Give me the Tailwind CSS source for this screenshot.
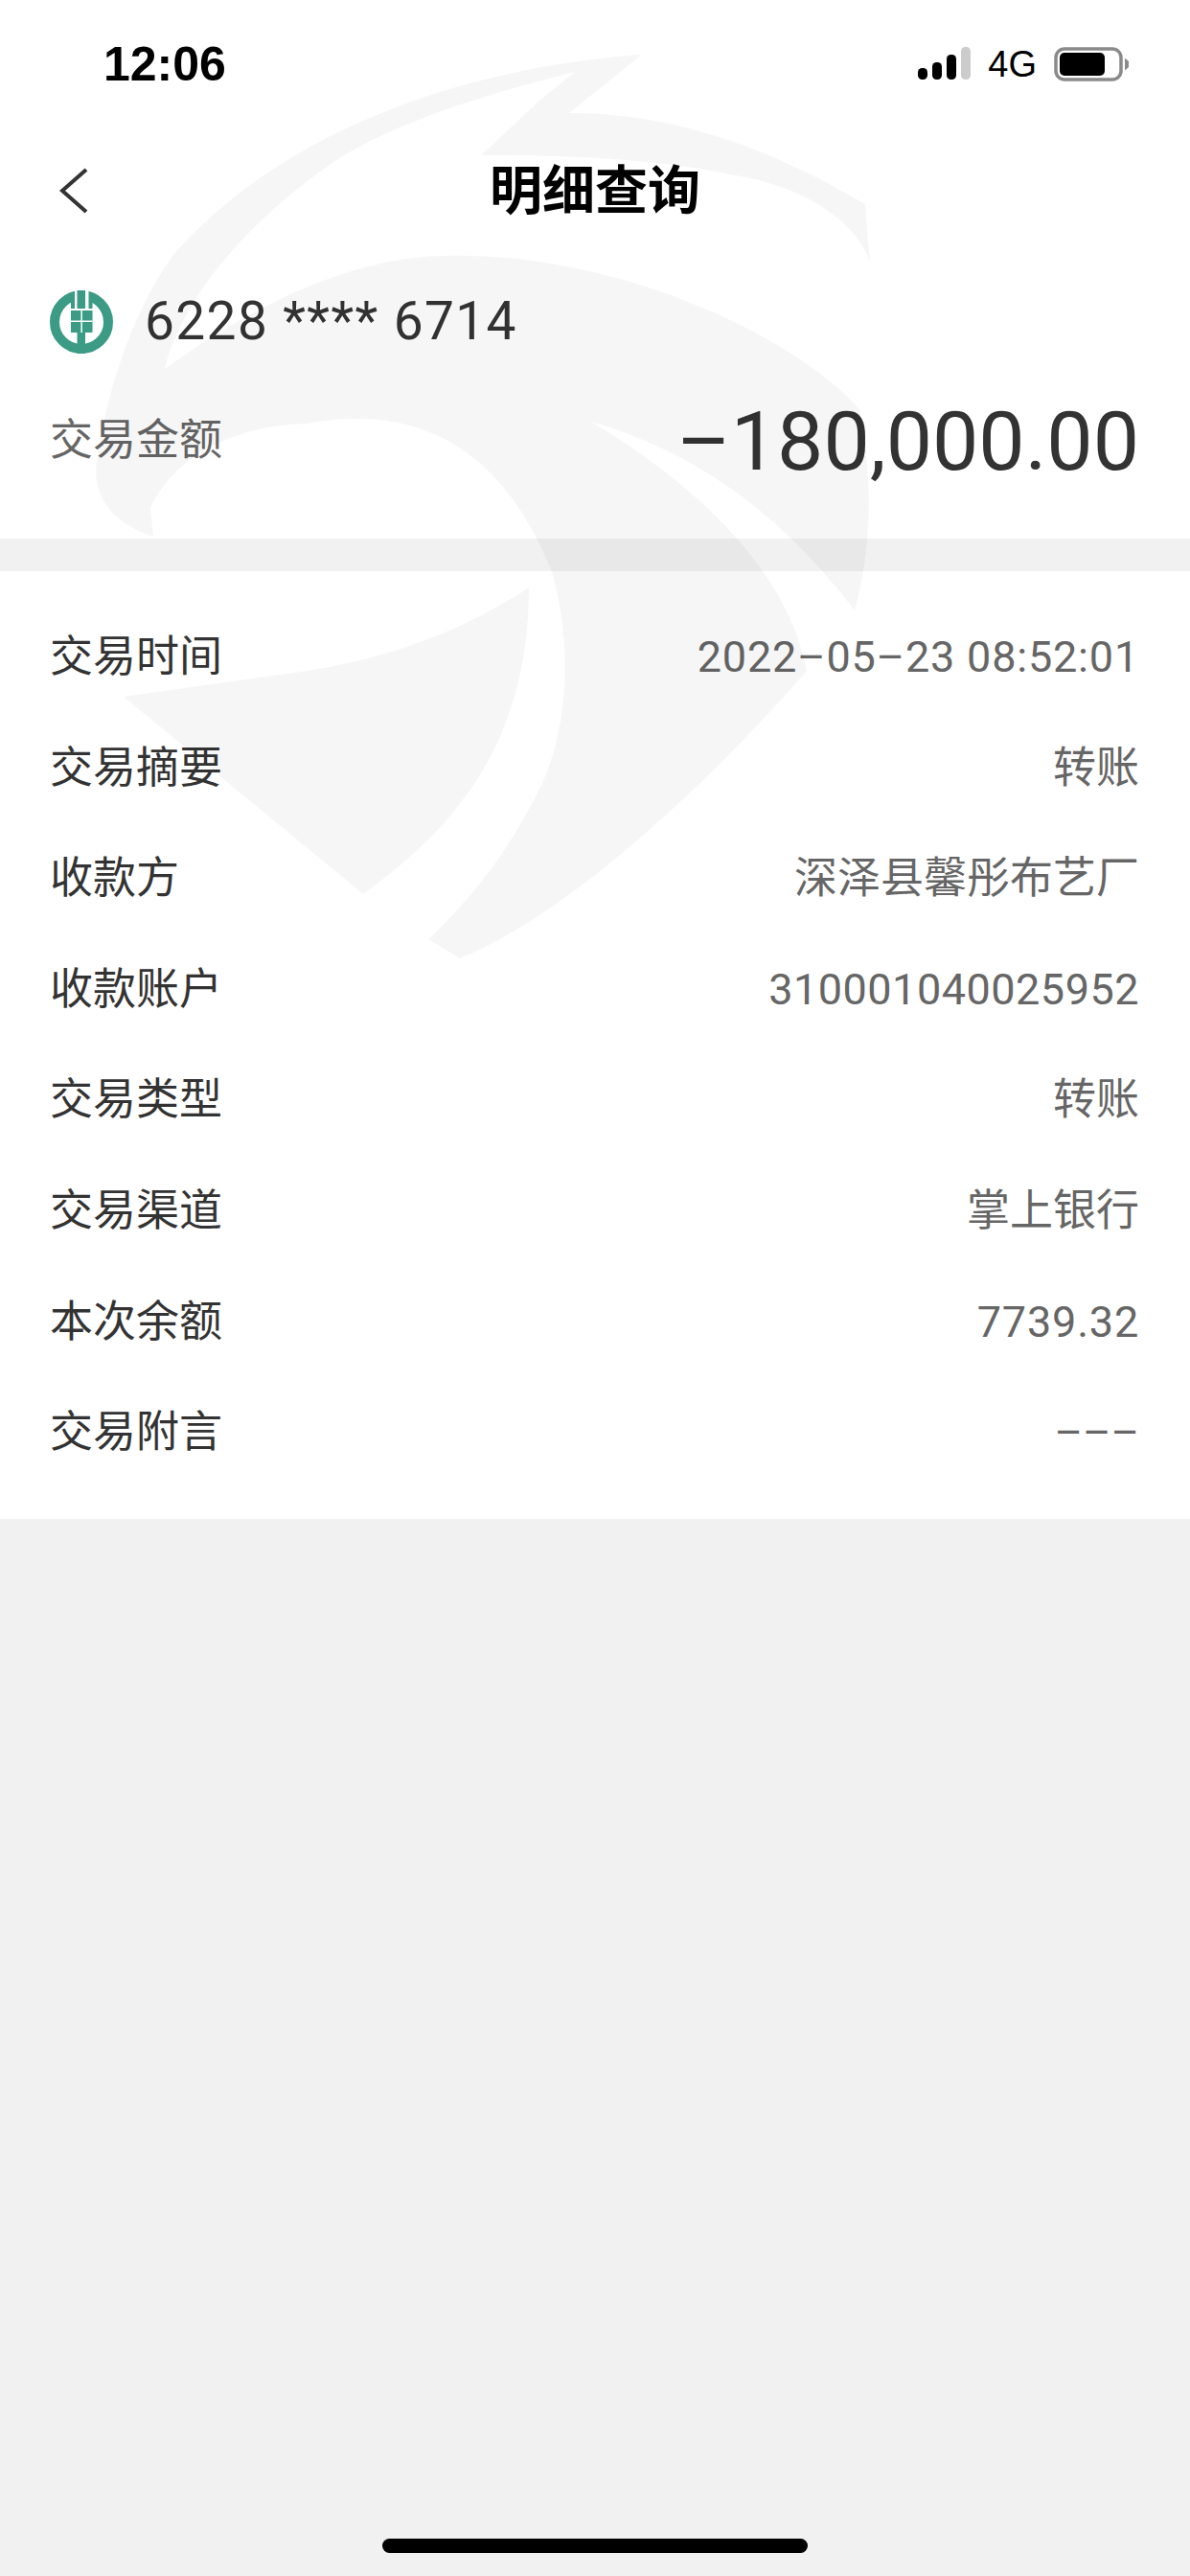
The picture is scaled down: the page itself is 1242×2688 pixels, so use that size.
<!DOCTYPE html>
<html lang="zh">
<head>
<meta charset="utf-8">
<title>明细查询</title>
<script src="https://cdn.jsdelivr.net/npm/@tailwindcss/browser@4"></script>
</head>
<body class="bg-[#f1f1f1] font-['Roboto','Noto_Sans_CJK_SC',sans-serif]">
<div class="relative w-[1242px] h-[2688px] overflow-hidden">

  <div class="bg-white">
    <!-- status bar -->
    <div class="h-[134px] flex items-center justify-between pl-[108px] pr-[64px]">
      <span class="text-[50px] font-bold text-black font-['Liberation_Sans',sans-serif]">12:06</span>
      <div class="flex items-center">
        <svg width="56" height="36" viewBox="0 0 56 36" class="mr-[17px]">
          <rect x="0" y="22" width="10" height="12" rx="4.5" fill="#000"/>
          <rect x="15" y="16" width="10" height="18" rx="4.5" fill="#000"/>
          <rect x="30" y="8" width="10" height="26" rx="4.5" fill="#000"/>
          <rect x="45" y="0" width="10" height="34" rx="4.5" fill="#ccc"/>
        </svg>
        <span class="text-[38px] text-black mr-[18px] font-['Liberation_Sans',sans-serif]">4G</span>
        <svg width="78" height="36" viewBox="0 0 78 36">
          <rect x="2" y="2" width="68" height="32" rx="9" fill="none" stroke="#8a8a8a" stroke-width="3.5"/>
          <rect x="6" y="6" width="47" height="24" rx="5" fill="#000"/>
          <path d="M74 11.5 L78 15 V21 L74 24.5 Z" fill="#8a8a8a"/>
        </svg>
      </div>
    </div>

    <!-- nav -->
    <div class="relative h-[130px] flex items-center justify-center">
      <svg width="30" height="48" viewBox="0 0 30 48" class="absolute left-[62px] top-[41px]">
        <path d="M28 2 L3 24 L28 46" fill="none" stroke="#333" stroke-width="4"/>
      </svg>
      <h1 class="text-[55px] font-bold text-black">明细查询</h1>
    </div>

    <!-- card -->
    <div class="pt-[39px] pl-[52px] pr-[53px]">
      <div class="flex items-center gap-[33px] h-[65px]">
        <svg width="66" height="66" viewBox="0 0 66 66">
          <circle cx="33" cy="33" r="28" fill="none" stroke="#3b9b85" stroke-width="10"/>
          <rect x="26" y="0" width="14.5" height="20" fill="#fff"/>
          <rect x="28.5" y="0" width="8.5" height="19" fill="#3b9b85"/>
          <rect x="22" y="11" width="4" height="8" fill="#3b9b85"/>
          <rect x="40.5" y="11" width="4" height="8" fill="#3b9b85"/>
          <rect x="22" y="21" width="22.5" height="23" fill="#3b9b85"/>
          <rect x="28.5" y="44" width="8.5" height="22" fill="#3b9b85"/>
          <rect x="22" y="31.5" width="22.5" height="1.5" fill="#fff"/>
          <rect x="32.4" y="21" width="1.5" height="23" fill="#fff"/>
        </svg>
        <span class="text-[55px] text-[#333] tracking-[1.4px]">6228 **** 6714</span>
      </div>
      <div class="mt-[40px] flex items-center justify-between h-[104px]">
        <span class="text-[45px] text-[#666]">交易金额</span>
        <span class="text-[86px] text-[#333]">–180,000.00</span>
      </div>
    </div>
    <div class="h-[50px]"></div>
  </div>

  <div class="h-[34px] bg-[#f1f1f1]"></div>

  <!-- detail rows -->
  <div class="bg-white pt-[32px] pb-[32px] pl-[52px] pr-[53px] text-[45px]">
    <div class="h-[115.6px] flex items-center justify-between"><span class="text-[#333]">交易时间</span><span class="text-[#666] tracking-[0.8px]">2022–05–23 08:52:01</span></div>
    <div class="h-[115.6px] flex items-center justify-between"><span class="text-[#333]">交易摘要</span><span class="text-[#666]">转账</span></div>
    <div class="h-[115.6px] flex items-center justify-between"><span class="text-[#333]">收款方</span><span class="text-[#666]">深泽县馨彤布艺厂</span></div>
    <div class="h-[115.6px] flex items-center justify-between"><span class="text-[#333]">收款账户</span><span class="text-[#666] tracking-[0.5px]">310001040025952</span></div>
    <div class="h-[115.6px] flex items-center justify-between"><span class="text-[#333]">交易类型</span><span class="text-[#666]">转账</span></div>
    <div class="h-[115.6px] flex items-center justify-between"><span class="text-[#333]">交易渠道</span><span class="text-[#666]">掌上银行</span></div>
    <div class="h-[115.6px] flex items-center justify-between"><span class="text-[#333]">本次余额</span><span class="text-[#666] tracking-[0.8px]">7739.32</span></div>
    <div class="h-[115.6px] flex items-center justify-between"><span class="text-[#333]">交易附言</span><span class="text-[#666]">–––</span></div>
  </div>

  <!-- watermark over the top part -->
  <svg class="absolute left-0 top-0 pointer-events-none" width="1242" height="1100" viewBox="0 0 1242 1100" fill="#000" fill-opacity="0.035">
    <path d="M670 57 C480 70 290 140 180 267 C135 330 108 420 100 490 C100 530 130 550 160 560 L157 530 C175 490 225 445 320 442 C440 420 525 470 576 597 C600 680 590 770 563 823 C535 880 500 930 447 980 L480 1000 C580 960 720 840 842 700 C825 610 750 520 617 440 C720 470 810 530 892 637 C905 590 915 520 897 427 C830 350 640 262 464 267 C370 267 260 320 172 385 C190 310 260 230 347 170 C400 135 480 105 600 75 Z"/>
    <path d="M670 57 L594 118 C680 118 780 140 903 213 L908 274 C890 220 820 190 761 182 C680 165 590 162 502 162 L563 105 L600 75 Z"/>
    <path d="M552 613 C480 660 400 690 299 703 L129 727 L379 933 C480 860 552 770 552 613 Z"/>
  </svg>

  <!-- home indicator -->
  <div class="absolute left-[399px] top-[2649px] w-[444px] h-[15px] rounded-full bg-black"></div>
</div>
</body>
</html>
